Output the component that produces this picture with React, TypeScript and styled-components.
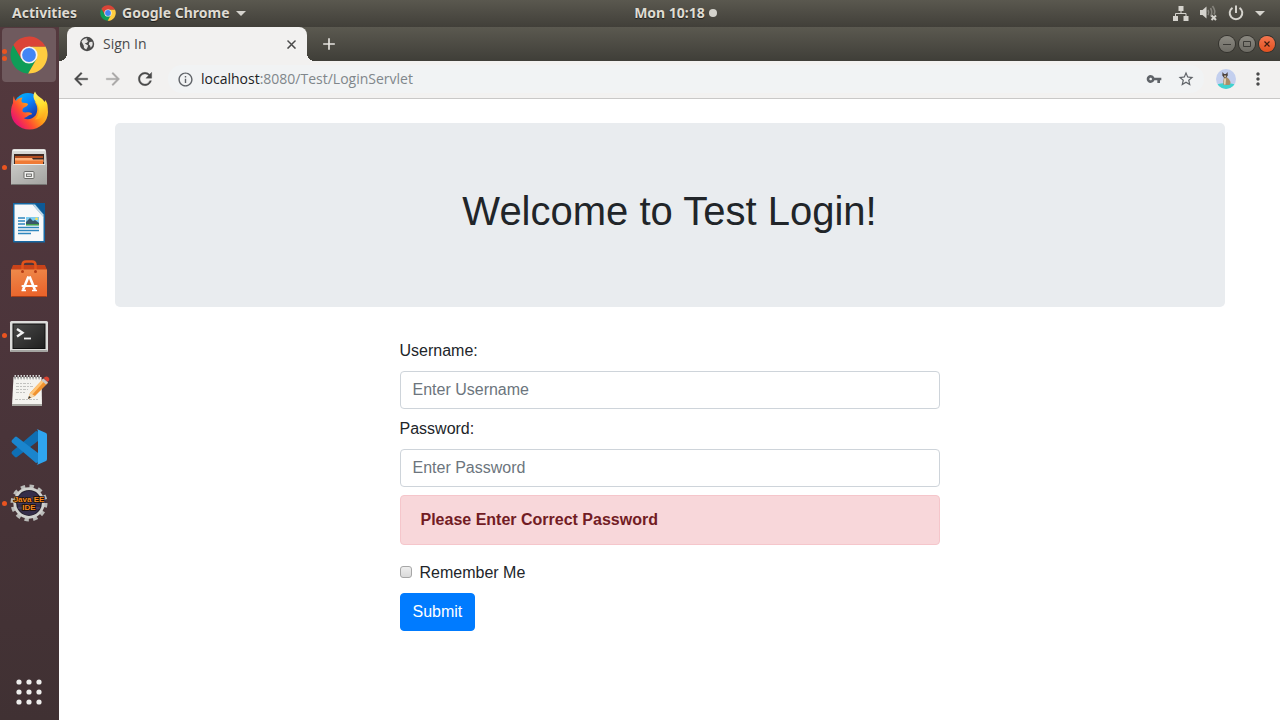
import React from "react";
import styled, { createGlobalStyle } from "styled-components";
import {
  MdAdd,
  MdArrowBack,
  MdArrowForward,
  MdClose,
  MdInfoOutline,
  MdMoreVert,
  MdRefresh,
  MdStarBorder,
  MdVpnKey,
} from "react-icons/md";

const shellFont = '"Open Sans", "Noto Sans", sans-serif';
const barFont = '"Noto Sans", "Open Sans", sans-serif';
const chromeBg = "#f2f1f0";
const orange = "#e95420";

const GlobalStyle = createGlobalStyle`
  *, *::before, *::after { box-sizing: border-box; }
  body { margin: 0; background: #fff; }
  svg { display: block; flex: none; }
  button { font: inherit; color: inherit; }
`;

/* ---------- desktop shell ---------- */

const Desktop = styled.div`
  display: grid;
  grid-template: 27px 1fr / 59px 1fr;
  min-height: 100vh;
  font-family: ${shellFont};
`;

const TopBar = styled.header`
  grid-column: 1 / -1;
  display: grid;
  grid-template-columns: 1fr auto 1fr;
  align-items: center;
  padding: 0 15px 1px 12px;
  background: linear-gradient(#5a584f, #413f39);
  color: #dfdbd2;
  font-family: ${barFont};
  font-size: 14px;
  font-weight: 700;
  line-height: 20px;
  text-shadow: 0 1px 1px rgba(0, 0, 0, 0.6);
`;

const BarGroup = styled.div<{ $end?: boolean; $gap: number }>`
  display: flex;
  align-items: center;
  justify-content: ${(p) => (p.$end ? "flex-end" : "flex-start")};
  gap: ${(p) => p.$gap}px;
`;

const BarButton = styled.button`
  display: flex;
  align-items: center;
  gap: 6px;
  padding: 0;
  border: 0;
  background: none;
  text-shadow: inherit;
  white-space: nowrap;
`;

const Clock = styled(BarButton)`
  gap: 4px;
  margin-left: 74px;
`;

const NoticeDot = styled.span`
  width: 8px;
  height: 8px;
  border-radius: 50%;
  background: #d5d3cd;
`;

const Caret = styled.span`
  border: 5px solid transparent;
  border-top-color: #d5d3cd;
  border-bottom: 0;
`;

const Dock = styled.nav`
  display: flex;
  flex-direction: column;
  gap: 2px;
  padding: 1px 3px 1px 2px;
  background: linear-gradient(#54393e, #4c353b 45%, #403133);
`;

const Launcher = styled.button<{ $active?: boolean; $last?: boolean }>`
  position: relative;
  width: 54px;
  height: 54px;
  margin-top: ${(p) => (p.$last ? "auto" : "0")};
  padding: 0;
  border: 0;
  border-radius: 4px;
  background: ${(p) => (p.$active ? "#6f5a5e" : "none")};
`;

const RunningDots = styled.span`
  position: absolute;
  left: 0;
  top: 0;
  bottom: 0;
  display: flex;
  flex-direction: column;
  justify-content: center;
  gap: 2px;
`;

const RunningDot = styled.span`
  width: 5px;
  height: 5px;
  border-radius: 50%;
  background: ${orange};
`;

/* ---------- browser window ---------- */

const Browser = styled.div`
  display: flex;
  flex-direction: column;
  min-width: 0;
`;

const TabStrip = styled.div`
  display: flex;
  align-items: center;
  height: 34px;
  padding: 0 5px 0 8px;
  background: linear-gradient(#5b5950, #3f3e38);
`;

const Tab = styled.div`
  position: relative;
  display: flex;
  align-items: center;
  gap: 8px;
  width: 240px;
  height: 34px;
  padding: 0 8px 0 12px;
  border-radius: 8px 8px 0 0;
  background: ${chromeBg};
  color: #4a4a4a;
  font-size: 14px;
  line-height: 20px;

  &::before,
  &::after {
    content: "";
    position: absolute;
    bottom: 0;
    width: 8px;
    height: 8px;
  }
  &::before {
    right: 100%;
    background: radial-gradient(circle at 0 0, transparent 8px, ${chromeBg} 8px);
  }
  &::after {
    left: 100%;
    background: radial-gradient(circle at 100% 0, transparent 8px, ${chromeBg} 8px);
  }
`;

const TabTitle = styled.span`
  flex: 1;
`;

const IconButton = styled.button<{ $color?: string; $size?: number; $bold?: boolean }>`
  display: flex;
  align-items: center;
  justify-content: center;
  flex: none;
  width: ${(p) => p.$size ?? 32}px;
  height: ${(p) => p.$size ?? 32}px;
  padding: 0;
  border: 0;
  background: none;
  color: ${(p) => p.$color ?? "#4a4a4a"};

  path {
    stroke: ${(p) => (p.$bold ? "currentColor" : "none")};
    stroke-width: 0.4px;
  }
  path[fill="none"] {
    stroke: none;
  }
`;

const NewTab = styled(IconButton)`
  margin: 0 auto 0 6px;
`;

const WindowButtons = styled.div`
  display: flex;
  gap: 4px;
`;

const WindowButton = styled.button<{ $close?: boolean }>`
  width: 16px;
  height: 16px;
  padding: 0;
  border: 0;
  border-radius: 50%;
  background: ${(p) =>
    p.$close ? "linear-gradient(#f4764f, #e2501f)" : "linear-gradient(#8b8981, #6d6b64)"};
  box-shadow: 0 0 0 1px #34332e;
`;

const Toolbar = styled.div`
  display: flex;
  align-items: center;
  height: 38px;
  padding: 0 6px 1px;
  border-bottom: 1px solid #c9c8c7;
  background: ${chromeBg};
`;

const Omnibox = styled.div`
  display: flex;
  align-items: center;
  flex: 1;
  height: 28px;
  margin: 0 6px 0 7px;
  padding: 0 2px 0 9px;
  border-radius: 14px;
  background: #f1f3f4;
`;

const Address = styled.div`
  flex: 1;
  margin-left: 7px;
  outline: none;
  color: #80868b;
  font-size: 14px;
  line-height: 20px;
`;

const Host = styled.span`
  color: #202124;
`;

/* ---------- sign-in page ---------- */

const Page = styled.main`
  flex: 1;
  width: 100%;
  max-width: 1140px;
  margin: 0 auto;
  padding: 24px 15px;
  color: #212529;
  font-family: "Liberation Sans", Arial, sans-serif;
  font-size: 16px;
  line-height: 24px;
`;

const Jumbotron = styled.section`
  margin-bottom: 32px;
  padding: 64px 32px 72px;
  border-radius: 5px;
  background: #e9ecef;
  text-align: center;
`;

const Heading = styled.h1`
  margin: 0;
  font-size: 40px;
  font-weight: 500;
  line-height: 48px;
`;

const Form = styled.form`
  display: flex;
  flex-direction: column;
  align-items: stretch;
  gap: 8px;
  width: 100%;
  max-width: 540px;
  margin: 0 auto;
`;

const TextInput = styled.input`
  width: 100%;
  height: 38px;
  padding: 6px 12px;
  border: 1px solid #ced4da;
  border-radius: 4px;
  background: #fff;
  color: #495057;
  font: inherit;

  &::placeholder {
    color: #6c757d;
    opacity: 1;
  }
`;

const Alert = styled.div`
  margin-bottom: 8px;
  padding: 12px 20px;
  border: 1px solid #f5c6cb;
  border-radius: 4px;
  background: #f8d7da;
  color: #721c24;
  font-weight: 700;
`;

const CheckRow = styled.div`
  display: flex;
  align-items: center;
  gap: 8px;
`;

const Checkbox = styled.input`
  appearance: none;
  width: 12px;
  height: 12px;
  margin: 0 0 2px;
  border: 1px solid #a6a6a6;
  border-radius: 3px;
  background: linear-gradient(#eee, #dadada);
`;

const Submit = styled.button`
  align-self: flex-start;
  height: 38px;
  padding: 6px 12px;
  border: 1px solid #007bff;
  border-radius: 4px;
  background: #007bff;
  color: #fff;
`;

/* ---------- drawings ---------- */

const chromeSector = "M43.4 18.5A18.5 18.5 0 0 0 11.4 17L19.6 31.3 27 27V18.5Z";

const ChromeMark = () => (
  <>
    <path d={chromeSector} fill="#0f9d58" transform="rotate(-120 27 27)" />
    <path d={chromeSector} fill="#ffcd40" transform="rotate(120 27 27)" />
    <path d={chromeSector} fill="#db4437" />
    <circle cx="27" cy="27" r="8.6" fill="#f4f4f4" />
    <circle cx="27" cy="27" r="6.9" fill="#4285f4" />
  </>
);

const FirefoxMark = () => (
  <>
    <defs>
      <linearGradient id="ffBody" x1="0.9" y1="0.2" x2="0.1" y2="0.75">
        <stop offset="0" stopColor="#ffd030" />
        <stop offset="0.4" stopColor="#ff9a18" />
        <stop offset="0.7" stopColor="#ff4b32" />
        <stop offset="1" stopColor="#e9166f" />
      </linearGradient>
      <linearGradient id="ffGlobe" x1="0" y1="0" x2="0.7" y2="1">
        <stop offset="0" stopColor="#00c0f5" />
        <stop offset="0.45" stopColor="#0a84ff" />
        <stop offset="1" stopColor="#20238f" />
      </linearGradient>
      <linearGradient id="ffFlame" x1="0.3" y1="0" x2="0.5" y2="1">
        <stop offset="0" stopColor="#fff36a" />
        <stop offset="0.5" stopColor="#ffe02f" />
        <stop offset="1" stopColor="#ffa51c" />
      </linearGradient>
    </defs>
    <circle cx="26" cy="23.500" r="14.500" fill="url(#ffGlobe)" />
    <path
      d="M12 12c0 2 1 4 2 5 1-2 4-3.500 6.500-3.500-1 2-1.500 3.500-.5 5 2 .5 5 0 6 1.500 0 2-3 3-4.500 4-1 1-1.500 2.500-.5 4 2 1 4 0 7 .5 2 .5 2.500 1.500 1.500 2-3 0-4 3-8 3.500 4 2.500 9 1 12-2.500 3-5 2-10-1-14l12 4c.8 2 1.500 4 1.500 6.500C46 38 37.500 45.500 27.500 45.500S9 38 9 28c0-4 1-7 2-9 0-3 0-5 1-7Z"
      fill="url(#ffBody)"
    />
    <path
      d="M33 7.500c-3 5-1 8 1.500 11.500 3.500 5 3.500 12-1.500 16.500 5 0 10-3 12-8 1.500-4.500.5-9-2-11.500 0 1 0 1.500-.5 2C40 13 35 13 33 7.500Z"
      fill="url(#ffFlame)"
    />
  </>
);

const FilesMark = () => (
  <>
    <defs>
      <linearGradient id="cabinet" x1="0" y1="0" x2="0" y2="1">
        <stop offset="0" stopColor="#dededc" />
        <stop offset="1" stopColor="#a1a19e" />
      </linearGradient>
      <linearGradient id="drawer" x1="0" y1="0" x2="1" y2="1">
        <stop offset="0" stopColor="#c9c9c6" />
        <stop offset="1" stopColor="#a3a3a0" />
      </linearGradient>
    </defs>
    <path d="M10 11q0-2 2-2h30q2 0 2 2l1 15v18q0 1-1 1H10q-1 0-1-1V26Z" fill="url(#cabinet)" />
    <path d="M11 10.500h32" stroke="#f6f6f4" />
    <path d="M12 14h30V25H12Z" fill="#3f2a24" />
    <path d="M13 16h28v2H13Z" fill="#b34d20" />
    <path d="M13 18h17l1 1.500h10.500V22h-28.500Z" fill="#ffb27c" />
    <path d="M13 20.500h28V25H13Z" fill="#ef7a35" />
    <path d="M11 24h32l2 3v17H9V27Z" fill="url(#drawer)" />
    <path d="M11 24.500h32" stroke="#ececea" />
    <path d="M9.500 44.500h35" stroke="#757572" />
    <rect x="22" y="31.500" width="10" height="7" rx="1" fill="#f2f2f0" stroke="#6c6c69" />
    <rect x="24.500" y="34" width="5" height="2.500" fill="#dcdcda" stroke="#5b5b58" strokeWidth=".8" />
  </>
);

const WriterMark = () => (
  <>
    <path d="M11 7h31q1 0 1 1v38.500H12q-1 0-1-1Z" fill="#1668a3" />
    <path d="M12.500 8.500h18L41.500 21v24h-29Z" fill="#f8f9fa" />
    <path d="M33 7h10v12Z" fill="#0d5a96" />
    <path d="m30.500 8.500 11 13V18.500L33 8.500Z" fill="#c4dcea" />
    <path
      d="M16 22h7M16 25h7M16 28h7M16 31.500h21M16 34.500h21M16 37.500h13"
      stroke="#2e86be"
      strokeWidth="1.500"
    />
    <rect x="24" y="21" width="13" height="8.500" fill="#7ecdf1" />
    <path d="m24 29v-3l4-4 3 3 2-1 4 3v2Z" fill="#37566a" />
    <path d="M24 29.500V28h13v1.500Z" fill="#46a04a" />
    <circle cx="34.500" cy="22.800" r="1.300" fill="#ffe14a" />
  </>
);

const SoftwareMark = () => (
  <>
    <defs>
      <linearGradient id="bag" x1="0" y1="0" x2="0.2" y2="1">
        <stop offset="0" stopColor="#ee8a4b" />
        <stop offset="1" stopColor="#ea652c" />
      </linearGradient>
    </defs>
    <path d="m9 18 2-5h32l2 5Z" fill="#c8431a" />
    <path d="M20.500 18v-5q0-3.500 3.500-3.500h6q3.500 0 3.500 3.500v5" fill="none" stroke="#e2531b" strokeWidth="2.500" />
    <path d="M9 17.500h36v26.500q0 1-1 1H10q-1 0-1-1Z" fill="url(#bag)" />
    <path d="M9.500 44.500h35" stroke="#a53d18" />
    <circle cx="20.500" cy="19.500" r="1.500" fill="#b53c15" />
    <circle cx="33.500" cy="19.500" r="1.500" fill="#b53c15" />
    <path d="m26.500 24.500-5.500 13.500M27.500 24.500l5.500 13.500" stroke="#fff" strokeWidth="2.600" />
    <path d="M20.500 34h14" stroke="#fff" strokeWidth="2.200" strokeLinecap="round" />
    <path d="M19.500 38.500h4.500M30 38.500h5" stroke="#fff" strokeWidth="1.500" />
  </>
);

const TerminalMark = () => (
  <>
    <defs>
      <linearGradient id="screen" x1="0" y1="0" x2="1" y2="1">
        <stop offset="0" stopColor="#4a4a49" />
        <stop offset="1" stopColor="#1f1f1f" />
      </linearGradient>
    </defs>
    <rect x="8" y="13" width="38" height="31" rx="1.500" fill="#dcdcda" />
    <path d="M8.500 43h37" stroke="#a4a4a1" strokeWidth="2" />
    <rect x="11" y="16" width="32" height="24.500" fill="url(#screen)" stroke="#111" />
    <path d="m15 21 5.500 3.800-5.500 3.800" fill="none" stroke="#f2f2f2" strokeWidth="2.400" />
    <path d="M22 30.500h7" stroke="#f2f2f2" strokeWidth="1.800" />
  </>
);

const EditorMark = () => (
  <>
    <path d="M11.500 13h28L40 41H10Z" fill="#f4f3ef" />
    <path d="M10 40h30v2H10Z" fill="#a5a49f" />
    <path d="M12.500 13.500h27" stroke="#d7d7d7" strokeWidth="5" strokeDasharray="1.500 1.500" />
    <path d="M12.500 13.500h27" stroke="#565656" strokeWidth="2" strokeDasharray="1 2" />
    <path
      d="M14 19.500h15M14 22.500h18M14 25.500h12M14 28.500h9M13 35.500h23"
      stroke="#c2c2bf"
      strokeDasharray="3 1 2 1"
    />
    <path d="m26 35 2-6L41 15l5 4-13 13Z" fill="#f0922f" />
    <path d="m28 29 13-14 2 1.500L30 31Z" fill="#ffc577" />
    <path d="m41.500 14 1.500-1q1.500-1 3 0l.5.500q1.500 1.500.5 3L45.500 18Z" fill="#d94432" />
    <path d="m39.500 16.500 4.500 4 2-2-4.500-4Z" fill="#c9c9c9" />
    <path d="m26 35 2-6 5 3Z" fill="#f5d9ae" />
    <path d="m26 35 1-3 2 1.500Z" fill="#333" />
  </>
);

const CodeMark = () => (
  <>
    <path d="m10 34 3 3q1 .8 2 0l23-17.500V12l-4-1L10 31.500Q9 33 10 34Z" fill="#0f6fb3" />
    <path d="m10 20 3-3q1-.8 2 0l23 17.500V42l-4 1L10 22.500Q9 21 10 20Z" fill="#1a85cd" />
    <path d="M34.500 9.800q.8-.5 1.500-.3l8 3.500q1 .5 1 2v24q0 1.500-1 2l-8 3.500q-.7.200-1.500-.3 1.500.3 1.500-1.700v-31q0-2-1.500-1.700Z" fill="#2fa5ef" />
  </>
);

const EclipseMark = () => (
  <>
    <circle cx="27" cy="27" r="16.500" fill="none" stroke="#b9bab8" strokeWidth="4" strokeDasharray="4.320 4.320" />
    <circle cx="27" cy="27" r="14.300" fill="#27212f" stroke="#cfd0cd" strokeWidth="2.800" />
    <ellipse cx="27" cy="27" rx="11.500" ry="12" fill="#352e4a" />
    <path d="M16 22h22M15.500 27h23M16 32h22" stroke="#544b70" />
    <g
      fill="#f58a1f"
      stroke="#1a0d05"
      strokeWidth="1.600"
      paintOrder="stroke"
      fontFamily="Liberation Sans, sans-serif"
      fontSize="8"
      fontWeight="700"
      textAnchor="middle"
    >
      <text x="27" y="26">Java EE</text>
      <text x="27" y="34">IDE</text>
    </g>
  </>
);

const AppGridMark = () => (
  <>
    {[17, 27, 37].map((y) =>
      [17, 27, 37].map((x) => <circle key={`${x}-${y}`} cx={x} cy={y} r="2.600" fill="#eeeeec" />)
    )}
  </>
);

const GlobeIcon = () => (
  <svg width="16" height="16" viewBox="0 0 16 16">
    <circle cx="8" cy="8" r="7.200" fill="#4a4a4a" />
    <path
      d="M2.500 5.500Q4 2.600 8.200 2.300L7.500 4l1.700 1L8 6.800l-2.200.4L7.500 8.500 9 9.200 8.700 11l-1.500 2.500L5 12 4.700 9.500Z"
      fill={chromeBg}
      opacity=".92"
    />
    <path d="m10.500 6 2.800-.3q.6 1.800.2 3.600l-1.700 2.500-.8-2.300-1.300-1Z" fill={chromeBg} opacity=".92" />
  </svg>
);

const NetworkIcon = () => (
  <svg width="16" height="16" viewBox="0 0 16 16" fill="#d5d3cd">
    <path d="M5.500 1h5v5h-5zM0 11h5v5H0zM10.500 11h5v5h-5z" />
    <path d="M8 6v3M2.500 11V8.500h10.500V11" fill="none" stroke="#d5d3cd" />
  </svg>
);

const MutedIcon = () => (
  <svg width="17" height="16" viewBox="0 0 17 16">
    <path d="M0 5h2.500L6.500 1.500v12L2.500 10H0Z" fill="#d5d3cd" />
    <path d="M8 5q1.500 2.500 0 5M10.500 3q2.500 4.500 0 8.500M12.500 1q3.500 5 1.500 8.500" fill="none" stroke="#85837c" strokeWidth="1.600" />
    <path d="m11.500 10.500 4.500 4.500m0-4.500L11.500 15" stroke="#d5d3cd" strokeWidth="2" />
  </svg>
);

const PowerIcon = () => (
  <svg width="16" height="16" viewBox="0 0 16 16" fill="none" stroke="#d5d3cd" strokeWidth="2">
    <path d="M4.500 2.800a6.300 6.300 0 1 0 7 0M8 .5v7.500" />
  </svg>
);

const Avatar = () => (
  <svg width="20" height="20" viewBox="0 0 20 20">
    <defs>
      <clipPath id="avatarClip">
        <circle cx="10" cy="10" r="10" />
      </clipPath>
    </defs>
    <g clipPath="url(#avatarClip)">
      <path d="M0 0h20v20H0Z" fill="#c3cfee" />
      <path d="M0 15.500q10-3 20 0V20H0Z" fill="#3fd3cf" />
      <path d="M8 8h2.500q3.500 2 4 5 0 3-1.500 3H7.500Q7 11 8 8Z" fill="#a98f69" />
      <path d="m6.500 3 1.500 2h2L11.500 3l.3 3.500L9.800 9H8.200L6.300 6.500Z" fill="#4a413d" />
      <path d="M8 6.500h2.300L9.700 8.500H8.500Z" fill="#d8c6a6" />
      <path d="M8.200 9.500h1.800l-.5 6H8Z" fill="#e6d7b8" />
    </g>
  </svg>
);

type LauncherItem = { name: string; Mark: React.FC; windows?: number; active?: boolean };

const launchers: LauncherItem[] = [
  { name: "Google Chrome", Mark: ChromeMark, windows: 2, active: true },
  { name: "Firefox", Mark: FirefoxMark },
  { name: "Files", Mark: FilesMark, windows: 1 },
  { name: "LibreOffice Writer", Mark: WriterMark },
  { name: "Ubuntu Software", Mark: SoftwareMark },
  { name: "Terminal", Mark: TerminalMark, windows: 1 },
  { name: "Text Editor", Mark: EditorMark },
  { name: "Visual Studio Code", Mark: CodeMark },
  { name: "Eclipse", Mark: EclipseMark, windows: 1 },
];

export default function App() {
  return (
    <Desktop>
      <GlobalStyle />
      <TopBar>
        <BarGroup $gap={23}>
          <BarButton>Activities</BarButton>
          <BarButton>
            <svg width="16" height="16" viewBox="8 8 38 38">
              <ChromeMark />
            </svg>
            Google Chrome
            <Caret />
          </BarButton>
        </BarGroup>
        <Clock>
          Mon 10:18
          <NoticeDot />
        </Clock>
        <BarGroup $gap={11} $end>
          <NetworkIcon />
          <MutedIcon />
          <PowerIcon />
          <Caret />
        </BarGroup>
      </TopBar>

      <Dock>
        {launchers.map(({ name, Mark, windows = 0, active }) => (
          <Launcher key={name} aria-label={name} $active={active}>
            <svg width="54" height="54" viewBox="0 0 54 54">
              <Mark />
            </svg>
            <RunningDots>
              {Array.from({ length: windows }, (_, i) => (
                <RunningDot key={i} />
              ))}
            </RunningDots>
          </Launcher>
        ))}
        <Launcher aria-label="Show Applications" $last>
          <svg width="54" height="54" viewBox="0 0 54 54">
            <AppGridMark />
          </svg>
        </Launcher>
      </Dock>

      <Browser>
        <TabStrip>
          <Tab>
            <GlobeIcon />
            <TabTitle>Sign In</TabTitle>
            <IconButton aria-label="Close tab" $size={16} $bold>
              <MdClose size={15} />
            </IconButton>
          </Tab>
          <NewTab aria-label="New tab" $color="#e6e4df">
            <MdAdd size={20} />
          </NewTab>
          <WindowButtons>
            <WindowButton aria-label="Minimize">
              <svg width="16" height="16" viewBox="0 0 16 16" stroke="#3c3b37">
                <path d="M4 8.500h8" />
              </svg>
            </WindowButton>
            <WindowButton aria-label="Maximize">
              <svg width="16" height="16" viewBox="0 0 16 16" fill="none" stroke="#3c3b37">
                <path d="M4.500 5.500h7v5h-7z" />
              </svg>
            </WindowButton>
            <WindowButton aria-label="Close" $close>
              <svg width="16" height="16" viewBox="0 0 16 16" stroke="#3c1c10" strokeWidth="1.200">
                <path d="m5.500 5.500 5 5m0-5-5 5" />
              </svg>
            </WindowButton>
          </WindowButtons>
        </TabStrip>

        <Toolbar>
          <IconButton aria-label="Back" $bold>
            <MdArrowBack size={20} />
          </IconButton>
          <IconButton aria-label="Forward" $color="#a9a8a7" $bold>
            <MdArrowForward size={20} />
          </IconButton>
          <IconButton aria-label="Reload" $bold>
            <MdRefresh size={20} />
          </IconButton>
          <Omnibox>
            <MdInfoOutline size={17} color="#5f6368" />
            <Address role="textbox" aria-label="Address" contentEditable suppressContentEditableWarning>
              <Host>localhost</Host>:8080/Test/LoginServlet
            </Address>
            <IconButton aria-label="Saved passwords" $color="#5f6368">
              <MdVpnKey size={16} />
            </IconButton>
            <IconButton aria-label="Bookmark this page" $color="#5f6368">
              <MdStarBorder size={18} />
            </IconButton>
          </Omnibox>
          <IconButton aria-label="Profile">
            <Avatar />
          </IconButton>
          <IconButton aria-label="Menu">
            <MdMoreVert size={20} />
          </IconButton>
        </Toolbar>

        <Page>
          <Jumbotron>
            <Heading>Welcome to Test Login!</Heading>
          </Jumbotron>
          <Form onSubmit={(e) => e.preventDefault()}>
            <label htmlFor="username">Username:</label>
            <TextInput id="username" type="text" placeholder="Enter Username" />
            <label htmlFor="password">Password:</label>
            <TextInput id="password" type="password" placeholder="Enter Password" />
            <Alert role="alert">Please Enter Correct Password</Alert>
            <CheckRow>
              <Checkbox id="remember" type="checkbox" />
              <label htmlFor="remember">Remember Me</label>
            </CheckRow>
            <Submit type="submit">Submit</Submit>
          </Form>
        </Page>
      </Browser>
    </Desktop>
  );
}
